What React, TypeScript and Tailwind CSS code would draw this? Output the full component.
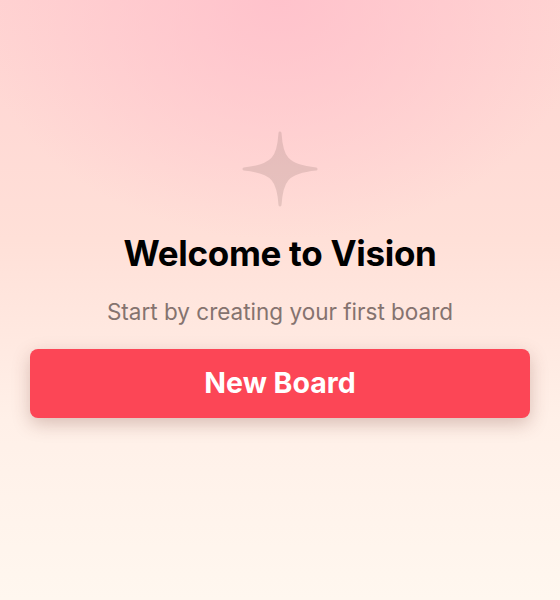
import React from 'react';

const Sparkle: React.FC = () => (
  <svg width="76" height="76" viewBox="0 0 76 76" className="text-[#6e5550] opacity-[0.17]">
    <path
      d="M38 2 C39.5 26 44 35 74 38 C44 41 39.5 50 38 74 C36.5 50 32 41 2 38 C32 35 36.5 26 38 2 Z"
      fill="currentColor"
      stroke="currentColor"
      strokeWidth="3"
      strokeLinejoin="round"
    />
  </svg>
);

export default function App() {
  return (
    <div
      className="relative w-full h-[600px] overflow-hidden font-['Inter',sans-serif] bg-[linear-gradient(180deg,#ffd3d2_0%,#ffe0d8_40%,#fff0e8_70%,#fff7ef_100%)]"
    >
      <div className="absolute inset-0 bg-[radial-gradient(ellipse_55%_40%_at_50%_0%,rgba(255,190,202,0.8),rgba(255,190,202,0)_100%)]" />
      <div className="relative flex flex-col items-center pt-[131px] px-[30px]">
        <Sparkle />
        <h1 className="mt-[25px] text-[35px] leading-[42px] font-bold text-black tracking-[-0.3px]">
          Welcome to Vision
        </h1>
        <p className="mt-[24px] text-[22.5px] leading-[28px] text-[#85736f]">
          Start by creating your first board
        </p>
        <button className="mt-[23px] w-full h-[69px] rounded-[8px] bg-[#fc4656] text-white text-[28.5px] font-bold shadow-[0_6px_18px_rgba(120,60,50,0.28)]">
          New Board
        </button>
      </div>
    </div>
  );
}
